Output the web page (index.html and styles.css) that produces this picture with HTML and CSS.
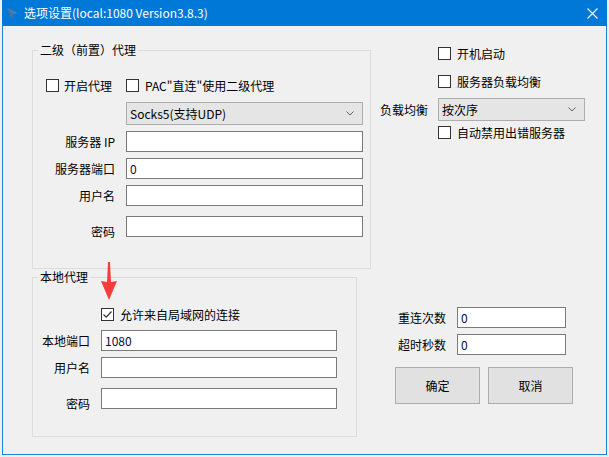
FILE: index.html
```html
<!DOCTYPE html>
<html lang="zh-CN">
<head>
<meta charset="utf-8">
<title>选项设置</title>
<link rel="stylesheet" href="styles.css">
</head>
<body>
<div class="window">
  <div class="titlebar">
    <svg class="app-icon" width="11" height="11" viewBox="0 0 11 11"><polygon points="0,0 11,5 6,6 5,11" fill="#4f7fae"/><polygon points="0,0 6,6 5,11" fill="#44729f"/></svg>
    <span class="title">选项设置(local:1080 Version3.8.3)</span>
    <svg class="close" width="11" height="11" viewBox="0 0 11 11"><path d="M0.5 0.5 L10.5 10.5 M10.5 0.5 L0.5 10.5" stroke="#fff" stroke-width="1.1" fill="none"/></svg>
  </div>
  <div class="client">
    <div class="left">
      <div class="group g1">
        <span class="legend">二级（前置）代理</span>
        <div class="grid grid1">
          <label class="check c-first"><span class="box"></span><span>开启代理</span></label>
          <label class="check"><span class="box"></span><span>PAC"直连"使用二级代理</span></label>
          <div class="select s1"><span>Socks5(支持UDP)</span><svg class="chev" width="8" height="5" viewBox="0 0 8 5"><path d="M0.5 0.5 L4 4 L7.5 0.5" stroke="#606060" fill="none"/></svg></div>
          <span class="lbl">服务器 IP</span><div class="input"></div>
          <span class="lbl">服务器端口</span><div class="input">0</div>
          <span class="lbl">用户名</span><div class="input"></div>
          <span class="lbl low">密码</span><div class="input"></div>
        </div>
      </div>
      <div class="group g2">
        <span class="legend">本地代理</span>
        <div class="grid grid2">
          <label class="check c-col2"><span class="box checked"><svg width="11" height="11" viewBox="0 0 11 11"><path d="M1.5 5.5 L4.2 8.2 L9.5 2.5" stroke="#333" stroke-width="1.2" fill="none"/></svg></span><span>允许来自局域网的连接</span></label>
          <span class="lbl">本地端口</span><div class="input">1080</div>
          <span class="lbl">用户名</span><div class="input"></div>
          <span class="lbl low">密码</span><div class="input"></div>
        </div>
      </div>
    </div>
    <div class="right">
      <label class="check rcheck"><span class="box"></span><span>开机启动</span></label>
      <label class="check rcheck r2"><span class="box"></span><span>服务器负载均衡</span></label>
      <div class="lb-row">
        <span class="lb-label">负载均衡</span>
        <div class="select s2"><span>按次序</span><svg class="chev" width="8" height="5" viewBox="0 0 8 5"><path d="M0.5 0.5 L4 4 L7.5 0.5" stroke="#606060" fill="none"/></svg></div>
      </div>
      <label class="check rcheck r3"><span class="box"></span><span>自动禁用出错服务器</span></label>
      <div class="num-form">
        <span class="nlbl">重连次数</span><div class="input">0</div>
        <span class="nlbl">超时秒数</span><div class="input">0</div>
      </div>
      <div class="buttons">
        <div class="btn">确定</div>
        <div class="btn">取消</div>
      </div>
    </div>
  </div>
  <svg class="arrow" width="20" height="44" viewBox="0 0 20 44"><polygon points="9,4 11,4 12,24 18,23 10,42 2,23 8,24" fill="#f73c3c"/></svg>
</div>
</body>
</html>
```
FILE: styles.css
```css
* { box-sizing: border-box; }
html, body { margin: 0; padding: 0; }
body {
  background: #f0f0f0;
  width: 609px;
  height: 457px;
  overflow: hidden;
  font-family: "Microsoft YaHei UI", "Noto Sans CJK SC", sans-serif;
  font-size: 12px;
  line-height: 16px;
  color: #000;
}
.window {
  position: relative;
  margin-left: 2px;
  width: 605px;
  height: 455px;
  border: 1px solid #1886e0;
  border-top: 0;
  background: #f0f0f0;
  display: flex;
  flex-direction: column;
}
.titlebar {
  height: 26px;
  background: #0078d7;
  display: flex;
  align-items: center;
  color: #fff;
  margin: 0 -1px;
  padding-left: 5px;
}
.app-icon { margin-top: 1px; flex: none; }
.title { margin-left: 6px; font-size: 12px; }
.close { margin-left: auto; margin-right: 9px; flex: none; }
.client { flex: 1; display: flex; }
.left { width: 377px; padding-left: 29px; padding-top: 24px; flex: none; }
.group {
  position: relative;
  border: 1px solid #dcdcdc;
}
.g1 { width: 339px; height: 219px; padding-top: 28px; }
.g2 { width: 325px; height: 160px; padding-top: 30px; margin-top: 8px; }
.legend {
  position: absolute;
  top: -9px;
  left: 5px;
  padding: 0 2px;
  background: #f0f0f0;
  line-height: 16px;
}
.grid { display: grid; row-gap: 6px; align-items: center; }
.grid1 { grid-template-columns: 93px 237px; }
.grid2 { grid-template-columns: 68px 236px; }
.check {
  display: flex;
  align-items: center;
  height: 13px;
  white-space: nowrap;
}
.grid .check { margin-bottom: 4px; }
.grid2 .check { margin-bottom: 3px; }
.c-first { padding-left: 13px; }
.c-col2 { grid-column: 2; }
.box {
  width: 13px;
  height: 13px;
  border: 1px solid #333;
  background: #fff;
  flex: none;
  margin-right: 6px;
  display: flex;
  align-items: center;
  justify-content: center;
}
.c-first .box { margin-right: 5px; }
.select {
  height: 23px;
  border: 1px solid #adadad;
  background: #e5e5e5;
  display: flex;
  align-items: center;
  padding: 0 8px 0 3px;
}
.select .chev { margin-left: auto; }
.s1 { grid-column: 2; }
.input {
  height: 21px;
  border: 1px solid #7a7a7a;
  background: #fff;
  padding-left: 3px;
  line-height: 19px;
  color: #0a0a3c;
}
.lbl { text-align: right; padding-right: 11px; white-space: nowrap; }
.lbl.low { padding-top: 12px; }
.right { flex: 1; padding-top: 21px; display: flex; flex-direction: column; }
.rcheck { margin-left: 58px; }
.rcheck.r2 { margin-top: 15px; }
.lb-row { display: flex; align-items: center; margin-top: 10px; height: 23px; }
.lb-label { width: 58px; flex: none; }
.s2 { width: 147px; }
.rcheck.r3 { margin-top: 5px; }
.num-form {
  display: grid;
  grid-template-columns: 59px 109px;
  row-gap: 6px;
  align-items: center;
  padding-left: 18px;
  margin-top: 168px;
}
.nlbl { white-space: nowrap; }
.buttons { display: flex; gap: 8px; margin-top: 12px; padding-left: 15px; }
.btn {
  width: 85px;
  height: 37px;
  border: 1px solid #adadad;
  background: #e1e1e1;
  display: flex;
  align-items: center;
  justify-content: center;
}
.arrow { position: absolute; left: 96px; top: 258px; }
```
